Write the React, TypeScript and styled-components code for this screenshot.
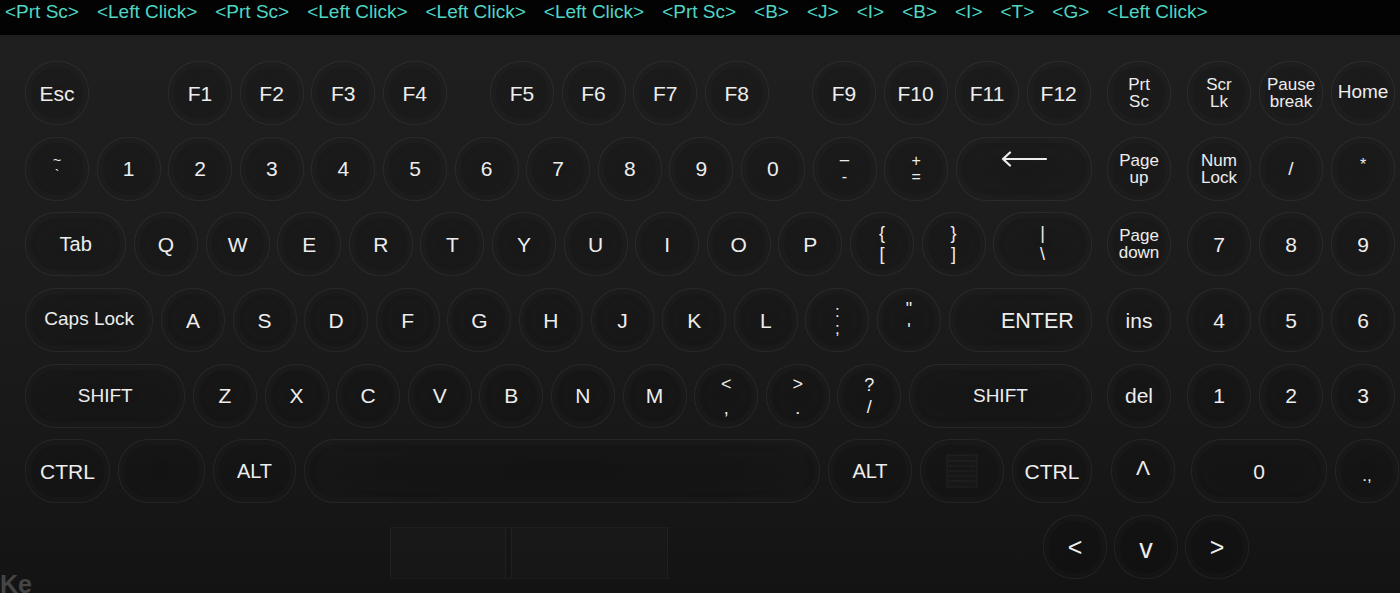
import React from "react";
import styled, { createGlobalStyle } from "styled-components";

const Global = createGlobalStyle`
  html, body { margin: 0; padding: 0; background: #191919; overflow: hidden; }
  body { font-family: "Liberation Sans", Arial, sans-serif; }
  * { box-sizing: border-box; }
`;

const Page = styled.div`
  width: 1400px;
  height: 593px;
  display: flex;
  flex-direction: column;
  overflow: hidden;
`;

const TopBar = styled.div`
  height: 35px;
  flex: none;
  background: #030303;
  display: flex;
  align-items: flex-start;
  gap: 18px;
  padding: 0 5px;
  font-size: 19px;
  line-height: 24px;
  color: #4fd6c4;
  white-space: nowrap;
`;

const Board = styled.div`
  flex: 1;
  display: flex;
  flex-direction: column;
  gap: 11.7px;
  padding: 26px 0 0 25px;
  background: linear-gradient(180deg, #1f1f1f 0%, #1c1c1c 45%, #171717 80%, #131313 100%);
`;

const Upper = styled.div`
  display: flex;
  align-items: flex-start;
`;

const Main = styled.div`
  width: 1067px;
  display: flex;
  flex-direction: column;
  gap: 11.7px;
`;

const Row = styled.div<{ $gap?: number }>`
  display: flex;
  gap: ${(p) => p.$gap ?? 7.6}px;
`;

const NumPad = styled.div`
  margin-left: 15px;
  display: grid;
  grid-template-columns: 80px 72px 72px 64px;
  grid-auto-rows: 64px;
  row-gap: 11.7px;
`;

const Key = styled.div<{ $w?: number; $ml?: number; $size?: number; $pl?: number; $pt?: number; $span?: number; $dx?: number }>`
  width: ${(p) => p.$w ?? 64}px;
  height: 64px;
  flex: none;
  margin-left: ${(p) => p.$ml ?? 0}px;
  padding-left: ${(p) => p.$pl ?? 0}px;
  padding-top: ${(p) => p.$pt ?? 0}px;
  ${(p) => (p.$span ? `grid-column: span ${p.$span};` : "")}
  ${(p) => (p.$dx ? `transform: translateX(${p.$dx}px);` : "")}
  display: flex;
  align-items: center;
  justify-content: center;
  border-radius: 31px;
  border: 1px solid rgba(255, 255, 255, 0.065);
  background: radial-gradient(ellipse at 50% 50%, rgba(0, 0, 0, 0.16) 0%, rgba(0, 0, 0, 0.08) 60%, rgba(255, 255, 255, 0.01) 100%);
  box-shadow: inset 0 0 0 5px rgba(255, 255, 255, 0.012), inset 0 0 0 11px rgba(0, 0, 0, 0.04);
  color: #ededed;
  font-size: ${(p) => p.$size ?? 21}px;
  line-height: 1;
  white-space: nowrap;
`;

const TwoLine = styled.span`
  display: flex;
  flex-direction: column;
  align-items: center;
  font-size: 17px;
  line-height: 17px;
`;

const Sym = styled.span<{ $lh?: number; $size?: number }>`
  display: flex;
  flex-direction: column;
  align-items: center;
  font-size: ${(p) => p.$size ?? 18}px;
  line-height: ${(p) => p.$lh ?? 21}px;
`;

const Raised = styled.span<{ $dy: number }>`
  display: block;
  transform: translateY(${(p) => p.$dy}px);
`;

const Lower = styled.div`
  display: flex;
  align-items: flex-start;
  height: 64px;
`;

const Touchpad = styled.div`
  margin: 12px 0 0 365px;
  width: 280px;
  height: 52px;
  display: flex;
  gap: 5px;
  border-top: 1px solid rgba(255, 255, 255, 0.035);
  border-bottom: 1px solid rgba(255, 255, 255, 0.035);
`;

const PadPart = styled.div<{ $w: number }>`
  width: ${(p) => p.$w}px;
  height: 100%;
  background: rgba(255, 255, 255, 0.015);
  border-left: 1px solid rgba(255, 255, 255, 0.04);
  border-right: 1px solid rgba(255, 255, 255, 0.04);
`;

const Arrows = styled.div`
  margin-left: 373px;
  display: flex;
  gap: 7px;
`;

const Caption = styled.div`
  margin: -22px 0 0 -25px;
  font-size: 25px;
  font-weight: bold;
  color: #444;
  line-height: 30px;
`;

const Backspace = () => (
  <svg width="48" height="18" viewBox="0 0 48 18">
    <path d="M46 9H3M10 2.5L3 9l7 6.5" fill="none" stroke="#ededed" strokeWidth="2.2" strokeLinecap="round" strokeLinejoin="round" />
  </svg>
);

const MenuIcon = () => (
  <svg width="32" height="34" viewBox="0 0 32 34">
    <rect x="1" y="1" width="30" height="32" fill="rgba(255,255,255,0.015)" stroke="rgba(255,255,255,0.06)" />
    {[7, 12, 17, 22, 27].map((y) => (
      <line key={y} x1="3" y1={y} x2="29" y2={y} stroke="rgba(255,255,255,0.06)" />
    ))}
  </svg>
);

const two = (a: string, b: string) => (
  <TwoLine>
    <span>{a}</span>
    <span>{b}</span>
  </TwoLine>
);

const sym = (a: React.ReactNode, b: React.ReactNode, lh = 21, size = 18) => (
  <Sym $lh={lh} $size={size}>
    <span>{a}</span>
    <span>{b}</span>
  </Sym>
);

const topItems = [
  "<Prt Sc>", "<Left Click>", "<Prt Sc>", "<Left Click>", "<Left Click>", "<Left Click>", "<Prt Sc>",
  "<B>", "<J>", "<I>", "<B>", "<I>", "<T>", "<G>", "<Left Click>",
];

const letters = (s: string) => s.split("").map((c) => <Key key={c}>{c}</Key>);

export default function App() {
  return (
    <Page>
      <Global />
      <TopBar>
        {topItems.map((t, i) => (
          <span key={i}>{t}</span>
        ))}
      </TopBar>
      <Board>
        <Upper>
          <Main>
            <Row>
              <Key>Esc</Key>
              <Key $ml={71.4}>F1</Key>
              <Key>F2</Key>
              <Key>F3</Key>
              <Key>F4</Key>
              <Key $ml={35.6}>F5</Key>
              <Key>F6</Key>
              <Key>F7</Key>
              <Key>F8</Key>
              <Key $ml={35.6}>F9</Key>
              <Key>F10</Key>
              <Key>F11</Key>
              <Key>F12</Key>
            </Row>
            <Row>
              <Key>
                <Sym $lh={13} $size={14}>
                  <Raised $dy={-2}>~</Raised>
                  <span>`</span>
                </Sym>
              </Key>
              {letters("1234567890")}
              <Key>
                <Sym $lh={16} $size={16}>
                  <Raised $dy={-8}>_</Raised>
                  <span>-</span>
                </Sym>
              </Key>
              <Key>{sym("+", "=", 16, 16)}</Key>
              <Key $w={136}>
                <Raised $dy={-8}>
                  <Backspace />
                </Raised>
              </Key>
            </Row>
            <Row>
              <Key $w={101.4} $size={20}>Tab</Key>
              {letters("QWERTYUIOP")}
              <Key>{sym("{", "[")}</Key>
              <Key>{sym("}", "]")}</Key>
              <Key $w={98.8}>{sym("|", "\\")}</Key>
            </Row>
            <Row>
              <Key $w={128.4} $size={19}>
                <Raised $dy={-2}>Caps Lock</Raised>
              </Key>
              {letters("ASDFGHJKL")}
              <Key>{sym(":", ";", 17, 17)}</Key>
              <Key>{sym('"', "'", 21, 18)}</Key>
              <Key $w={143.8} $pl={34} $pt={3} $size={21.5}>ENTER</Key>
            </Row>
            <Row>
              <Key $w={160.4} $size={19}>SHIFT</Key>
              {letters("ZXCVBNM")}
              <Key>{sym("<", ",", 24)}</Key>
              <Key>{sym(">", ".", 24)}</Key>
              <Key>{sym("?", "/", 22)}</Key>
              <Key $w={183} $size={19}>SHIFT</Key>
            </Row>
            <Row $gap={8}>
              <Key $w={85}>CTRL</Key>
              <Key $w={87} />
              <Key $w={83} $size={20}>ALT</Key>
              <Key $w={516} />
              <Key $w={84} $size={20}>ALT</Key>
              <Key $w={84}>
                <MenuIcon />
              </Key>
              <Key $w={80}>CTRL</Key>
            </Row>
          </Main>
          <NumPad>
            <Key>{two("Prt", "Sc")}</Key>
            <Key>{two("Scr", "Lk")}</Key>
            <Key>{two("Pause", "break")}</Key>
            <Key $size={19}>
              <Raised $dy={-2}>Home</Raised>
            </Key>

            <Key>{two("Page", "up")}</Key>
            <Key>{two("Num", "Lock")}</Key>
            <Key $size={19}>/</Key>
            <Key $size={16}>
              <Raised $dy={-4}>*</Raised>
            </Key>

            <Key>{two("Page", "down")}</Key>
            <Key>7</Key>
            <Key>8</Key>
            <Key>9</Key>

            <Key>ins</Key>
            <Key>4</Key>
            <Key>5</Key>
            <Key>6</Key>

            <Key>del</Key>
            <Key>1</Key>
            <Key>2</Key>
            <Key>3</Key>

            <Key $dx={4}>
              <Raised $dy={-4}>Λ</Raised>
            </Key>
            <Key $span={2} $w={136} $dx={4}>0</Key>
            <Key $dx={4} $size={17}>
              <Raised $dy={4}>.,</Raised>
            </Key>
          </NumPad>
        </Upper>
        <Lower>
          <Touchpad>
            <PadPart $w={116} />
            <PadPart $w={157} />
          </Touchpad>
          <Arrows>
            <Key $size={25}>&lt;</Key>
            <Key $size={27}>
              <Raised $dy={2}>v</Raised>
            </Key>
            <Key $size={25}>&gt;</Key>
          </Arrows>
        </Lower>
        <Caption>Ke</Caption>
      </Board>
    </Page>
  );
}
